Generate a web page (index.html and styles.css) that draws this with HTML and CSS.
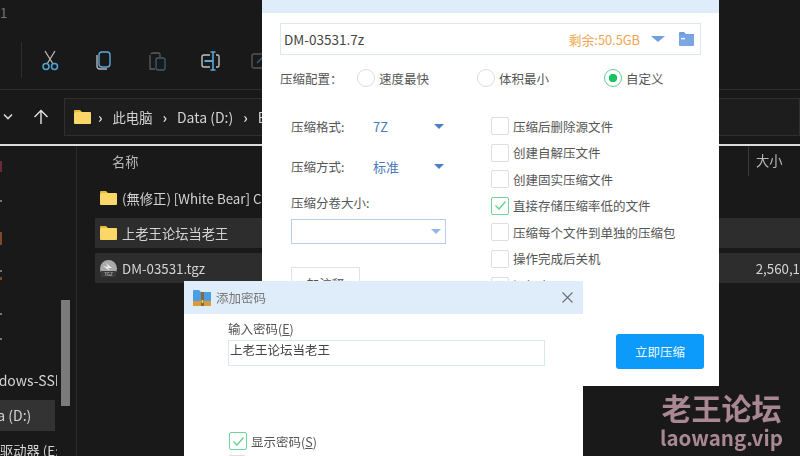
FILE: index.html
```html
<!DOCTYPE html>
<html lang="zh-CN">
  <head>
    <meta charset="UTF-8" />
    <title>添加密码</title>
    <link rel="stylesheet" href="styles.css">
  </head>
  <body>
    <div class="explorer">
      <div class="toolbar">
        <div class="tab-number">1</div>
        <div class="tools">
          <svg class="tool" width="24" height="24" viewBox="0 0 24 24" fill="none" stroke-width="1.3">
            <path d="M7 3 L15 16 M17 3 L9 16" stroke="#b9b9b9"/>
            <circle cx="8" cy="18.5" r="3" stroke="#4fa6d8" stroke-width="1.5"/>
            <circle cx="16.5" cy="18.5" r="3" stroke="#4fa6d8" stroke-width="1.5"/>
          </svg>
          <svg class="tool" width="24" height="24" viewBox="0 0 24 24" fill="none" stroke-width="1.4">
            <rect x="8" y="4" width="11" height="15" rx="3" stroke="#5aa9dc"/>
            <path d="M6 7 V18 Q6 21 9 21 H16" stroke="#b5b5b5"/>
          </svg>
          <svg class="tool dim" width="24" height="24" viewBox="0 0 24 24" fill="none" stroke-width="1.3">
            <path d="M6 6 Q6 5 8 5 H14 Q15 5 15 7 V9 M5 7 V21 H10" stroke="#5d5d5d"/>
            <rect x="11" y="10" width="9" height="12" rx="2" stroke="#35607c"/>
          </svg>
          <svg class="tool" width="24" height="24" viewBox="0 0 24 24" fill="none" stroke-width="1.4">
            <path d="M12 7 H6 Q4 7 4 9 V17 Q4 19 6 19 H12 M18 7 H20 Q21 7 21 9 V17 Q21 19 20 19 H18" stroke="#c2c2c2"/>
            <path d="M15 4 V22 M12.5 4 H17.5 M12.5 22 H17.5" stroke="#5aa9dc" stroke-width="1.6"/>
            <path d="M6.5 13 H15" stroke="#5aa9dc" stroke-width="2"/>
          </svg>
          <svg class="tool dim" width="24" height="24" viewBox="0 0 24 24" fill="none" stroke-width="1.4">
            <rect x="1" y="6" width="16" height="14" rx="2" stroke="#555"/>
            <path d="M6 15 L14 7" stroke="#35607c"/>
          </svg>
        </div>
      </div>

      <div class="address-row">
        <svg class="chevron" width="12" height="8" viewBox="0 0 12 8" fill="none" stroke="#d8d8d8" stroke-width="1.6">
          <path d="M2 1.5 L6 5.5 L10 1.5"/>
        </svg>
        <svg class="up" width="16" height="16" viewBox="0 0 16 16" fill="none" stroke="#e4e4e4" stroke-width="1.4">
          <path d="M8 15 V2 M1.5 8 L8 1.5 L14.5 8"/>
        </svg>
        <div class="address-box">
          <svg class="crumb-folder" width="17" height="14" viewBox="0 0 17 14">
            <path d="M0 1 Q0 0 1 0 H6 L8 2 H0 Z" fill="#e9b93c"/>
            <rect y="2" width="17" height="12" rx="1" fill="#fbd768"/>
          </svg>
          <span class="crumb-sep">›</span>
          <span>此电脑</span>
          <span class="crumb-sep">›</span>
          <span class="crumb-latin">Data (D:)</span>
          <span class="crumb-sep">›</span>
          <span class="crumb-latin">B</span>
        </div>
      </div>

      <div class="content">
        <div class="sidebar">
          <div class="nav-mark red one"></div>
          <div class="nav-mark two"></div>
          <div class="nav-mark orange three"></div>
          <div class="nav-mark four"></div>
          <div class="nav-mark orange five"></div>
          <div class="nav-mark six"></div>
          <div class="nav-mark seven"></div>
          <div class="nav-item windows">Windows-SSI</div>
          <div class="nav-item selected">Data (D:)</div>
          <div class="nav-item drive">驱动器 (E:</div>
          <div class="nav-scroll"></div>
        </div>
        <div class="files">
          <div class="file-head">
            <span class="col-name">名称</span>
            <span class="col-size">大小</span>
          </div>
          <div class="file-row first">
            <svg class="folder" width="17" height="14" viewBox="0 0 17 14">
              <path d="M0 1 Q0 0 1 0 H6 L8 2 H0 Z" fill="#e9b93c"/>
              <rect y="2" width="17" height="12" rx="1" fill="#fbd768"/>
            </svg>
            <span>(無修正) [White Bear] C</span>
          </div>
          <div class="file-row shaded">
            <svg class="folder" width="17" height="14" viewBox="0 0 17 14">
              <path d="M0 1 Q0 0 1 0 H6 L8 2 H0 Z" fill="#e9b93c"/>
              <rect y="2" width="17" height="12" rx="1" fill="#fbd768"/>
            </svg>
            <span>上老王论坛当老王</span>
          </div>
          <div class="file-row shaded">
            <svg class="folder" width="17" height="17" viewBox="0 0 17 17">
              <circle cx="8.5" cy="8.5" r="8.5" fill="#a9a9a9"/>
              <path d="M3 6 L8 7 L6 3 L12 8 L8 8 L10 11 Z" fill="#eee"/>
              <rect x="1" y="11" width="15" height="6" fill="#3a3a3a"/>
              <text class="tgz-label" x="8.5" y="16">TGZ</text>
            </svg>
            <span>DM-03531.tgz</span>
            <span class="file-size">2,560,1</span>
          </div>
        </div>
      </div>
    </div>

    <div class="window compress">
      <div class="compress-title"></div>
      <div class="compress-body">
        <div class="name-field">
          <span class="name-value">DM-03531.7z</span>
          <span class="free-space">剩余:50.5GB</span>
          <span class="caret wide"></span>
          <svg width="15" height="14" viewBox="0 0 15 14">
            <path d="M0 1 Q0 0 1 0 H5 L7 2 H15 V4 H0 Z" fill="#6f9fdc"/>
            <rect y="3" width="15" height="11" rx="1" fill="#7aa7e2"/>
            <rect x="2" y="6" width="4" height="1.3" fill="#fff"/>
          </svg>
        </div>

        <div class="preset-row">
          <span class="preset-label">压缩配置：</span>
          <span class="radio"></span><span class="preset-text fast">速度最快</span>
          <span class="radio"></span><span class="preset-text small">体积最小</span>
          <span class="radio on"></span><span>自定义</span>
        </div>

        <div class="options">
          <div class="format-col">
            <div class="format-row">
              <span class="format-label">压缩格式:</span>
              <span class="format-value">7Z</span>
              <span class="caret"></span>
            </div>
            <div class="format-row">
              <span class="format-label">压缩方式:</span>
              <span class="format-value">标准</span>
              <span class="caret"></span>
            </div>
            <div class="split-label">压缩分卷大小:</div>
            <div class="split-box"><span class="caret pale"></span></div>
            <div class="comment-btn">加注释</div>
          </div>
          <div class="check-col">
            <div class="check-row"><span class="check"></span>压缩后删除源文件</div>
            <div class="check-row"><span class="check"></span>创建自解压文件</div>
            <div class="check-row"><span class="check"></span>创建固实压缩文件</div>
            <div class="check-row"><span class="check on"><svg width="13" height="11" viewBox="0 0 13 11" fill="none" stroke="#5fd08a" stroke-width="1.3"><path d="M1.5 5.5 L5 9 L11.5 1.5"/></svg></span>直接存储压缩率低的文件</div>
            <div class="check-row"><span class="check"></span>压缩每个文件到单独的压缩包</div>
            <div class="check-row"><span class="check"></span>操作完成后关机</div>
            <div class="check-row"><span class="check"></span>添加密码</div>
          </div>
        </div>

        <div class="compress-btn">立即压缩</div>
      </div>
    </div>

    <div class="window password">
      <div class="password-title">
        <svg width="18" height="16" viewBox="0 0 18 16">
          <path d="M0 1 Q0 0 1 0 H6 L8 2 H18 V12 H0 Z" fill="#4a9ee6"/>
          <rect y="11" width="18" height="5" fill="#dd9a3a"/>
          <rect x="8" y="2" width="3" height="14" fill="#8a6a35"/>
          <rect x="8.6" y="10" width="1.8" height="3" fill="#f0d050"/>
        </svg>
        <span class="password-name">添加密码</span>
        <svg class="close" width="11" height="11" viewBox="0 0 11 11" fill="none" stroke="#6a7078" stroke-width="1.1">
          <path d="M0.5 0.5 L10.5 10.5 M10.5 0.5 L0.5 10.5"/>
        </svg>
      </div>
      <div class="password-body">
        <div class="password-label">输入密码(<u>E</u>)</div>
        <div class="password-box">上老王论坛当老王</div>
        <div class="check-row show"><span class="check on"><svg width="13" height="11" viewBox="0 0 13 11" fill="none" stroke="#5fd08a" stroke-width="1.3"><path d="M1.5 5.5 L5 9 L11.5 1.5"/></svg></span>显示密码(<u>S</u>)</div>
        <div class="check-row"><span class="check"></span></div>
      </div>
    </div>

    <div class="watermark">
      <div class="mark-cn">老王论坛</div>
      <div class="mark-en">laowang.vip</div>
    </div>
  </body>
</html>
```

FILE: styles.css
```css
* {
  box-sizing: border-box;
}

body {
  margin: 0;
  width: 800px;
  height: 456px;
  overflow: hidden;
  position: relative;
  background-color: #191919;
  font-family: "Noto Sans CJK SC", "Noto Sans", sans-serif;
  font-size: 12.5px;
  color: #555;
  filter: blur(0.35px);
}

/* explorer behind the dialogs */
.explorer {
  display: flex;
  flex-direction: column;
  height: 456px;
  color: #d4d4d4;
  font-size: 13.3px;
}

.toolbar {
  height: 90px;
  flex: none;
  border-bottom: 1px solid #2e2e2e;
  padding-top: 4px;
}

.tab-number {
  color: #777;
  line-height: 18px;
  height: 38px;
}

.tools {
  display: flex;
  gap: 29.3px;
  margin-left: 21px;
  padding-left: 16px;
  height: 36px;
  align-items: center;
  border-left: 1px solid #2c2c2c;
}

.tool {
  flex: none;
}

.address-row {
  height: 54px;
  flex: none;
  display: flex;
  align-items: center;
  padding-left: 1px;
}

.chevron {
  margin-left: 1px;
}

.up {
  margin-left: 19px;
  margin-right: 15px;
}

.address-box {
  flex: 1;
  height: 38px;
  display: flex;
  align-items: center;
  padding-left: 9px;
  background-color: #1d1d1d;
  border: 1px solid #2f2f2f;
}

.crumb-folder {
  margin-right: -3px;
}

.crumb-sep {
  margin: 0 10px;
  color: #ddd;
  font-size: 14px;
  font-weight: 700;
}

.crumb-latin {
  font-size: 14px;
}

.content {
  flex: 1;
  display: grid;
  grid-template-columns: 77px 1fr;
  border-top: 2px solid #dcdcdc;
}

.sidebar {
  position: relative;
  overflow: hidden;
  border-right: 1px solid #2a2a2a;
  font-size: 14px;
}

/* slivers of sidebar icons left at the window edge */
.nav-mark {
  width: 2px;
  height: 2px;
  background-color: #77777a;
}

.nav-mark.red {
  background-color: #6a2a35;
}

.nav-mark.orange {
  background-color: #7a4a2a;
}

.one {
  height: 11px;
  margin-top: 15px;
}

.two {
  margin-top: 28px;
}

.three {
  height: 13px;
  margin-top: 30px;
}

.four {
  margin-top: 25px;
}

.five {
  height: 3px;
  margin-top: 5px;
}

.six {
  margin-top: 33px;
}

.seven {
  margin-top: 23px;
}

.nav-item {
  width: 57px;
  overflow: hidden;
  white-space: nowrap;
  line-height: 31px;
  height: 31px;
}

.windows {
  margin-top: 25px;
  text-indent: -26px;
}

.selected {
  width: 55px;
  margin-top: 4px;
  background-color: #333;
  text-indent: -25px;
}

.drive {
  margin-top: 4px;
  font-size: 13.3px;
}

.nav-scroll {
  position: absolute;
  left: 61px;
  top: 154px;
  width: 9px;
  height: 106px;
  background-color: #7b7b7b;
}

.files {
  overflow: hidden;
}

.file-head {
  display: flex;
  height: 30px;
  align-items: center;
  color: #b8b8b8;
}

.col-name {
  margin-left: 35px;
  flex: 1;
}

.col-size {
  width: 52px;
  height: 30px;
  line-height: 30px;
  border-left: 1px solid #3a3a3a;
  padding-left: 7px;
}

.file-row {
  display: flex;
  align-items: center;
  height: 30px;
  margin-left: 18px;
  margin-bottom: 5px;
  padding-left: 5px;
  white-space: nowrap;
}

.file-row.first {
  margin-top: 7px;
}

.file-row.shaded {
  background-color: #2d2d2d;
}

.folder {
  flex: none;
  margin-right: 5px;
}

.tgz-label {
  font-size: 4.5px;
  fill: #ddd;
  text-anchor: middle;
}

.file-size {
  margin-left: auto;
}

/* dialogs sit on top of the explorer like free windows */
.window {
  position: absolute;
  background-color: #fff;
}

.compress {
  left: 262px;
  top: 0;
  width: 457px;
  height: 386px;
}

.compress-title {
  height: 13px;
  background-color: #dfecf9;
}

.compress-body {
  padding: 10px 18px 0;
}

.name-field {
  display: flex;
  align-items: center;
  width: 421px;
  height: 32px;
  padding: 0 6px 0 3px;
  border: 1px solid #dce6ef;
}

.name-value {
  flex: 1;
  font-size: 13.5px;
  color: #444;
}

.free-space {
  margin-right: 11px;
  color: #f0a64e;
  font-size: 12.8px;
}

.caret {
  flex: none;
  display: inline-block;
  width: 0;
  height: 0;
  border-left: 5px solid transparent;
  border-right: 5px solid transparent;
  border-top: 5px solid #4d7fc9;
}

.caret.wide {
  margin-right: 14px;
  border-left-width: 7px;
  border-right-width: 7px;
  border-top-width: 6px;
  border-top-color: #6f9fdc;
}

.caret.pale {
  border-top-color: #93b6e6;
}

.preset-row {
  display: flex;
  align-items: center;
  height: 24px;
  margin-top: 11px;
}

.preset-label {
  width: 77px;
}

.radio {
  flex: none;
  width: 18px;
  height: 18px;
  margin-right: 4px;
  border-radius: 50%;
  border: 1px solid #dcdcdc;
}

.radio.on {
  border: 1.5px solid #5fd08a;
  background: radial-gradient(circle, #1fc262 0 4px, #fff 4.5px);
}

.preset-text.fast {
  width: 98px;
}

.preset-text.small {
  width: 105px;
}

.options {
  display: flex;
  margin-top: 24px;
}

.format-col {
  width: 211px;
  padding-left: 11px;
  flex: none;
}

.format-row {
  display: flex;
  align-items: center;
  height: 25px;
  margin-bottom: 15px;
}

.format-label {
  width: 82px;
}

.format-value {
  width: 61px;
  color: #4a78b8;
  font-size: 13px;
}

.split-label {
  height: 18px;
  line-height: 18px;
  margin-top: 1px;
}

.split-box {
  display: flex;
  align-items: center;
  justify-content: flex-end;
  width: 155px;
  height: 25px;
  margin-top: 7px;
  padding-right: 4px;
  border: 1px solid #b6cfea;
}

.comment-btn {
  width: 69px;
  height: 30px;
  margin-top: 23px;
  border: 1px solid #e3e3e3;
  text-align: center;
  line-height: 32px;
}

.check-col {
  display: flex;
  flex-direction: column;
  gap: 8.6px;
  padding-top: 3px;
}

.check-row {
  display: flex;
  align-items: center;
  height: 18px;
  white-space: nowrap;
}

.check {
  flex: none;
  display: flex;
  align-items: center;
  justify-content: center;
  width: 18px;
  height: 18px;
  margin-right: 4px;
  border: 1px solid #dedede;
  border-radius: 2px;
}

.check.on {
  border: 1.5px solid #6fd896;
}

.compress-btn {
  position: absolute;
  left: 354px;
  top: 334px;
  width: 88px;
  height: 35px;
  border-radius: 3px;
  background-color: #0c9bfb;
  color: #f0f8ff;
  text-align: center;
  line-height: 35px;
}

.password {
  left: 184px;
  top: 281px;
  width: 399px;
  height: 175px;
}

.password-title {
  display: flex;
  align-items: center;
  height: 33px;
  padding: 0 10px 0 9px;
  background-color: #dfecf9;
}

.password-name {
  flex: 1;
  margin-left: 5px;
  color: #777;
}

.password-body {
  padding: 6px 0 0 44px;
}

.password-label {
  line-height: 18px;
}

.password-box {
  width: 317px;
  height: 26px;
  margin-top: 2px;
  padding-left: 1px;
  border: 1px solid #dce6ef;
  line-height: 18px;
  color: #444;
}

.show {
  margin-top: 66px;
  margin-left: 1px;
  margin-bottom: 5px;
}

.watermark {
  position: absolute;
  left: 660px;
  top: 390px;
  color: #a98893;
  font-weight: 700;
  text-align: center;
}

.mark-cn {
  font-size: 30px;
  line-height: 34px;
}

.mark-en {
  margin-top: 1px;
  font-size: 20.5px;
  line-height: 24px;
}
```
